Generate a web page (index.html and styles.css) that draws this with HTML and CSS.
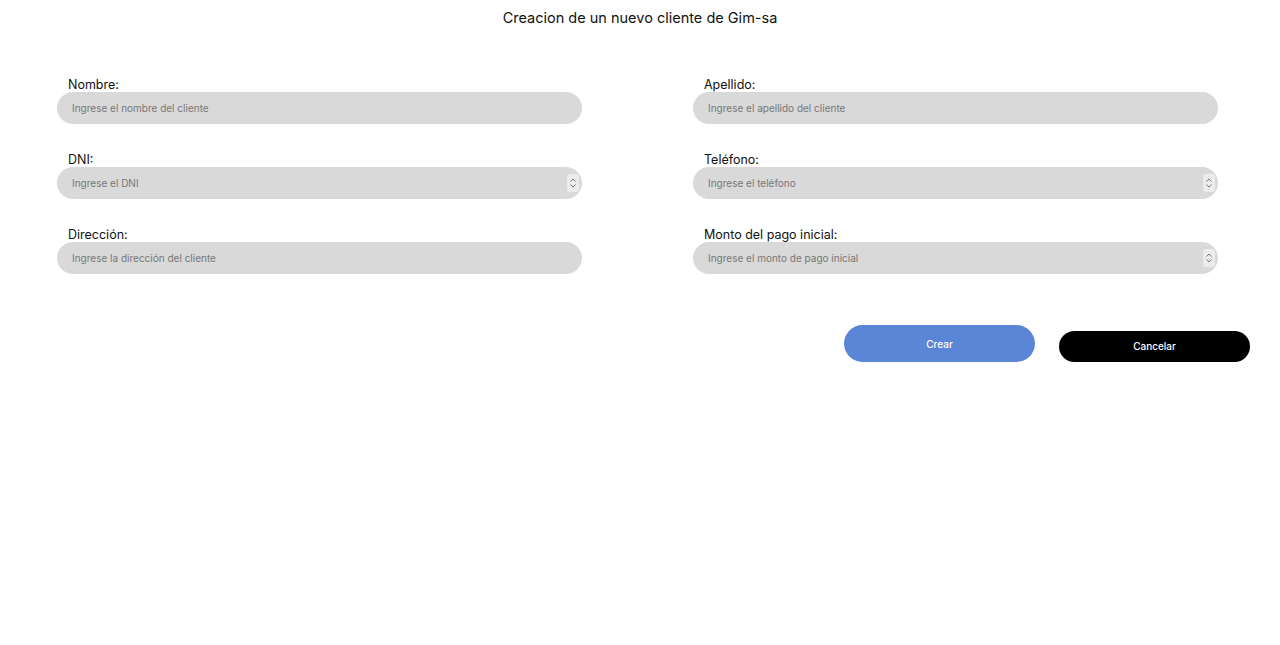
FILE: index.html
```html
<!DOCTYPE html>
<html lang="es">
<head>
<meta charset="utf-8">
<title>Creacion de cliente</title>
<link rel="stylesheet" href="styles.css">
</head>
<body>
<h1 class="title">Creacion de un nuevo cliente de Gim-sa</h1>
<form class="form">
  <div class="field">
    <label class="label">Nombre:</label>
    <div class="input-wrap"><input class="input" type="text" placeholder="Ingrese el nombre del cliente"></div>
  </div>
  <div class="field">
    <label class="label">Apellido:</label>
    <div class="input-wrap"><input class="input" type="text" placeholder="Ingrese el apellido del cliente"></div>
  </div>
  <div class="field">
    <label class="label">DNI:</label>
    <div class="input-wrap"><input class="input" type="text" placeholder="Ingrese el DNI"><span class="spin"><svg viewBox="0 0 10 16" width="10" height="16"><path d="M2.5 6.5 5 4 7.5 6.5M2.5 9.5 5 12 7.5 9.5" fill="none" stroke="#777" stroke-width="1"/></svg></span></div>
  </div>
  <div class="field">
    <label class="label">Teléfono:</label>
    <div class="input-wrap"><input class="input" type="text" placeholder="Ingrese el teléfono"><span class="spin"><svg viewBox="0 0 10 16" width="10" height="16"><path d="M2.5 6.5 5 4 7.5 6.5M2.5 9.5 5 12 7.5 9.5" fill="none" stroke="#777" stroke-width="1"/></svg></span></div>
  </div>
  <div class="field">
    <label class="label">Dirección:</label>
    <div class="input-wrap"><input class="input" type="text" placeholder="Ingrese la dirección del cliente"></div>
  </div>
  <div class="field">
    <label class="label">Monto del pago inicial:</label>
    <div class="input-wrap"><input class="input" type="text" placeholder="Ingrese el monto de pago inicial"><span class="spin"><svg viewBox="0 0 10 16" width="10" height="16"><path d="M2.5 6.5 5 4 7.5 6.5M2.5 9.5 5 12 7.5 9.5" fill="none" stroke="#777" stroke-width="1"/></svg></span></div>
  </div>
</form>
<div class="actions">
  <button class="btn btn-primary" type="button">Crear</button>
  <button class="btn btn-dark" type="button">Cancelar</button>
</div>
</body>
</html>
```
FILE: styles.css
```css
* { box-sizing: border-box; }
body {
  margin: 0;
  font-family: Inter, "Noto Sans", sans-serif;
  color: #111;
  background: #fff;
}
.title {
  margin: 0;
  padding-top: 9px;
  font-size: 14.5px;
  font-weight: 400;
  line-height: 18px;
  text-align: center;
}
.form {
  display: grid;
  grid-template-columns: 525px 525px;
  column-gap: 111px;
  row-gap: 27px;
  padding-left: 57px;
  margin-top: 49px;
}
.field {
  display: flex;
  flex-direction: column;
}
.label {
  font-size: 12.5px;
  line-height: 15px;
  padding-top: 1px;
  padding-left: 11px;
  color: #111;
}
.input-wrap {
  position: relative;
}
.input {
  display: block;
  width: 100%;
  height: 32px;
  border: none;
  border-radius: 16px;
  background: #d9d9d9;
  padding: 0 15px;
  font-family: Inter, "Noto Sans", sans-serif;
  font-size: 10px;
  color: #333;
  outline: none;
}
.input::placeholder { color: #777; }
.spin {
  position: absolute;
  right: 3px;
  top: 7px;
  width: 12px;
  height: 18px;
  background: #ececec;
  border-radius: 3px;
  display: flex;
  align-items: center;
  justify-content: center;
}
.actions {
  display: flex;
  justify-content: flex-end;
  align-items: flex-end;
  gap: 24px;
  padding-right: 30px;
  margin-top: 51px;
}
.btn {
  border: none;
  width: 191px;
  border-radius: 19px;
  color: #fff;
  font-family: Inter, "Noto Sans", sans-serif;
  font-size: 10px;
  font-weight: 500;
}
.btn-primary {
  height: 37px;
  background: #5b86d7;
  padding-top: 1px;
  padding-bottom: 0;
}
.btn-dark {
  height: 31px;
  background: #000;
  border-radius: 16px;
  padding-bottom: 2px;
}
```
